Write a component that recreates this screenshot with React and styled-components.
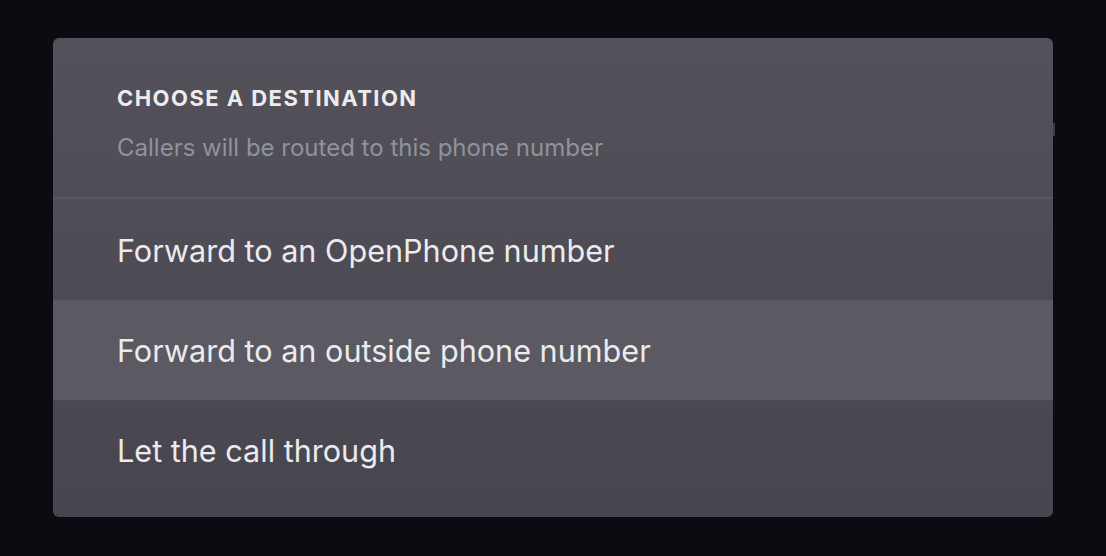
import React from "react";
import styled, { createGlobalStyle } from "styled-components";

const Global = createGlobalStyle`
  html, body { margin: 0; padding: 0; background: #0b0c11; }
  body { font-family: Inter, "Noto Sans", sans-serif; -webkit-font-smoothing: antialiased; }
`;

const Page = styled.div`
  width: 1106px;
  height: 556px;
  box-sizing: border-box;
  padding: 38px 53px 39px;
  background: #0b0c11;
`;

const Panel = styled.div`
  position: relative;
  width: 1000px;
  height: 479px;
  display: flex;
  flex-direction: column;
`;

const Clip = styled.div`
  border-radius: 6px;
  overflow: hidden;
  display: flex;
  flex-direction: column;
  height: 100%;
  background: linear-gradient(#54515a, #47454d);
`;

const Header = styled.div`
  height: 161px;
  box-sizing: border-box;
  padding: 46px 64px 0;
  border-bottom: 2px solid #5b5862;
`;

const Title = styled.h2`
  margin: 0;
  font-size: 22px;
  font-weight: 700;
  letter-spacing: 1.45px;
  color: #ececee;
  line-height: 28px;
`;

const Subtitle = styled.p`
  margin: 22px 0 0;
  font-size: 24px;
  color: #8f939e;
  line-height: 28px;
`;

const List = styled.div`
  display: flex;
  flex-direction: column;
  flex: 1;
`;

const Item = styled.div`
  height: ${(p) => p.$h}px;
  box-sizing: border-box;
  padding: ${(p) => p.$pt}px 64px 0;
  font-size: 30.6px;
  line-height: 36px;
  color: #ebebed;
  background: ${(p) => (p.$active ? "#5b5961" : "transparent")};
`;

const EdgeNub = styled.div`
  position: absolute;
  right: -2px;
  top: 85px;
  width: 2px;
  height: 13px;
  background: #3b3a41;
`;

export default function App() {
  return (
    <>
      <Global />
      <Page>
        <Panel>
          <Clip>
            <Header>
              <Title>CHOOSE A DESTINATION</Title>
              <Subtitle>Callers will be routed to this phone number</Subtitle>
            </Header>
            <List>
              <Item $h={101} $pt={34}>Forward to an OpenPhone number</Item>
              <Item $h={100} $pt={33} $active>Forward to an outside phone number</Item>
              <Item $h={117} $pt={33}>Let the call through</Item>
            </List>
          </Clip>
          <EdgeNub />
        </Panel>
      </Page>
    </>
  );
}
